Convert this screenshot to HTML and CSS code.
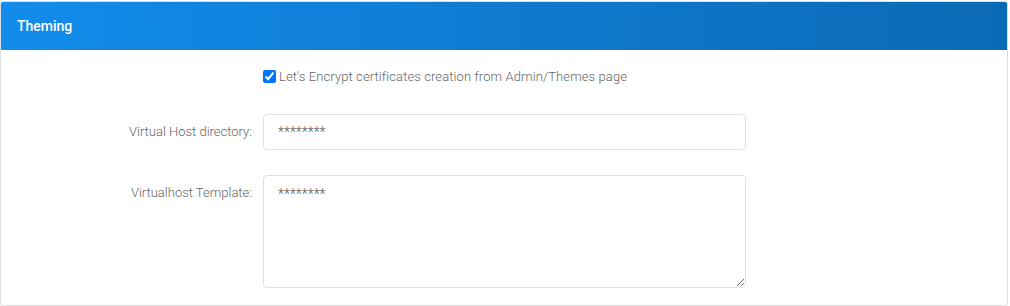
FILE: index.html
```html
<!DOCTYPE html>
<html lang="en">
<head>
    <meta charset="UTF-8">
    <meta name="viewport" content="width=device-width, initial-scale=1.0">
    <title>Theming</title>
    <link rel="stylesheet" href="styles.css">
</head>
<body>
    <div class="panel">
        <div class="panel-heading">Theming</div>
        <div class="panel-body">
            <div class="form-row">
                <div></div>
                <label class="check">
                    <input type="checkbox" checked>
                    <span>Let's Encrypt certificates creation from Admin/Themes page</span>
                </label>
            </div>
            <div class="form-row row-input">
                <label class="form-label" for="vhost-dir">Virtual Host directory:</label>
                <input class="form-control" type="text" id="vhost-dir" value="********">
            </div>
            <div class="form-row row-textarea">
                <label class="form-label" for="vhost-tpl">Virtualhost Template:</label>
                <textarea class="form-control area" id="vhost-tpl">********</textarea>
            </div>
        </div>
    </div>
</body>
</html>
```

FILE: styles.css
```css
body {
    font-family: Roboto, "Liberation Sans", sans-serif;
    margin: 0;
    padding: 1px 2px 0 0;
    background-color: #fff;
}
.panel {
    border: 1px solid #dedede;
    border-radius: 3px;
    overflow: hidden;
    height: 305px;
    box-sizing: border-box;
}
.panel-heading {
    height: 48px;
    display: flex;
    align-items: center;
    padding: 0 16px;
    color: #fff;
    font-size: 14px;
    font-weight: 500;
    background: linear-gradient(to right, #128cec, #0b6ab5);
}
.panel-body {
    padding-top: 18px;
}
.form-row {
    display: grid;
    grid-template-columns: 251px 483px;
    column-gap: 11px;
}
.row-input {
    margin-top: 30px;
}
.row-textarea {
    margin-top: 25px;
}
.check {
    display: flex;
    align-items: center;
    font-size: 13px;
    font-weight: 300;
    letter-spacing: 0.1px;
    color: #666;
    height: 16px;
}
.check input {
    margin: 0 3px 0 0;
    width: 13px;
    height: 13px;
}
.form-label {
    text-align: right;
    font-size: 13px;
    font-weight: 300;
    line-height: 16px;
    color: #666;
    padding-top: 10px;
}
.form-control {
    box-sizing: border-box;
    width: 483px;
    height: 36px;
    border: 1px solid #e0e0e0;
    border-radius: 4px;
    padding: 0 14px;
    font-family: Roboto, "Liberation Sans", sans-serif;
    font-size: 14px;
    font-weight: 300;
    color: #555;
    outline: none;
}
.area {
    height: 113px;
    padding: 10px 14px;
    line-height: 16px;
}
```
